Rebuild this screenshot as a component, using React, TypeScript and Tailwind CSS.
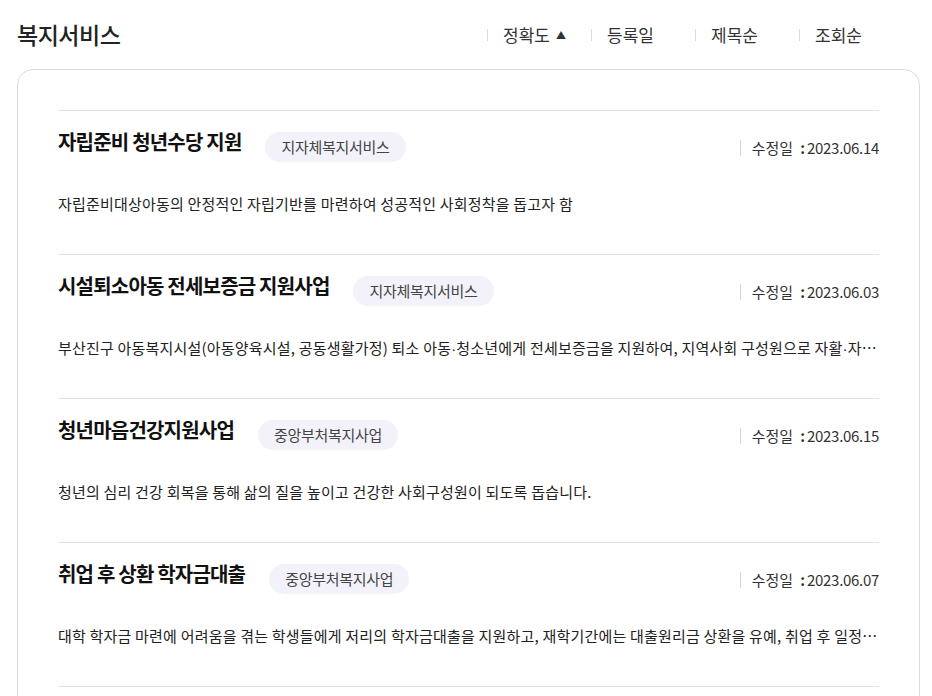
import React from 'react';

interface Service {
  title: string;
  category: string;
  updated: string;
  summary: string;
}

const services: Service[] = [
  {
    title: '자립준비 청년수당 지원',
    category: '지자체복지서비스',
    updated: '2023.06.14',
    summary: '자립준비대상아동의 안정적인 자립기반를 마련하여 성공적인 사회정착을 돕고자 함',
  },
  {
    title: '시설퇴소아동 전세보증금 지원사업',
    category: '지자체복지서비스',
    updated: '2023.06.03',
    summary:
      '부산진구 아동복지시설(아동양육시설, 공동생활가정) 퇴소 아동·청소년에게 전세보증금을 지원하여, 지역사회 구성원으로 자활·자립할 수 있도록 지원함',
  },
  {
    title: '청년마음건강지원사업',
    category: '중앙부처복지사업',
    updated: '2023.06.15',
    summary: '청년의 심리 건강 회복을 통해 삶의 질을 높이고 건강한 사회구성원이 되도록 돕습니다.',
  },
  {
    title: '취업 후 상환 학자금대출',
    category: '중앙부처복지사업',
    updated: '2023.06.07',
    summary:
      '대학 학자금 마련에 어려움을 겪는 학생들에게 저리의 학자금대출을 지원하고, 재학기간에는 대출원리금 상환을 유예, 취업 후 일정 소득이 발생한 시점부터 상환하도록 함',
  },
  {
    title: '청년 월세 한시 특별지원',
    category: '중앙부처복지사업',
    updated: '2023.06.01',
    summary: '경제적 어려움을 겪는 청년의 주거비 부담을 덜어주기 위해 월세를 한시적으로 지원합니다.',
  },
];

const sorts = ['정확도', '등록일', '제목순', '조회순'];

// the site's middle dot is narrow, CJK font draws it full width
const renderSummary = (text: string) =>
  text.split('·').map((part, i) => (
    <React.Fragment key={i}>
      {i > 0 && <span className="font-['Liberation_Sans',sans-serif] leading-none">·</span>}
      {part}
    </React.Fragment>
  ));

const ServiceItem: React.FC<{ item: Service }> = ({ item }) => (
  <li className="border-t border-[#e2e2e2] pt-[17px] pb-[38px]">
    <div className="flex items-start">
      <h3 className="text-[20px] leading-[28px] font-bold tracking-[-0.8px] text-[#111]">{item.title}</h3>
      <span className="ml-6 mt-1 h-[30px] px-4 rounded-full bg-[#f3f2fa] text-[15px] leading-[30px] tracking-[-0.3px] text-[#444]">
        {item.category}
      </span>
      <div className="ml-auto mt-[10px] flex items-center text-[15px] leading-5 text-[#333]">
        <span className="h-4 w-px bg-[#d6d6d6]" />
        <span className="ml-[11px]">수정일</span>
        <span className="ml-[7px] mr-[2px] font-bold">:</span>
        <span className="tracking-[-0.3px]">{item.updated}</span>
      </div>
    </div>
    <p className="mt-[30px] h-6 text-[15px] leading-6 tracking-[0.2px] text-[#222] truncate">
      {renderSummary(item.summary)}
    </p>
  </li>
);

export default function App() {
  return (
    <div className="min-h-screen bg-white font-['Noto_Sans_CJK_KR','Noto_Sans',sans-serif]">
      <header className="h-[69px] flex items-center justify-between pl-[17px] pr-[29px]">
        <h1 className="text-[23px] font-medium text-[#222] tracking-[-0.5px]">복지서비스</h1>
        <ul className="flex">
          {sorts.map((label, i) => (
            <li key={label} className="w-[104px] flex items-center">
              <span className="h-3 w-px bg-[#dcdcdc]" />
              <button className="ml-[15px] flex items-center text-[17px] text-[#333]">
                {label}
                {i === 0 && <span className="ml-[6px] text-[10px] text-[#333]">▲</span>}
              </button>
            </li>
          ))}
        </ul>
      </header>
      <section className="ml-[17px] mr-[12px] rounded-2xl border border-[#dcdcdc] px-10 pt-10">
        <ul>
          {services.map((s) => (
            <ServiceItem key={s.title} item={s} />
          ))}
        </ul>
      </section>
    </div>
  );
}
